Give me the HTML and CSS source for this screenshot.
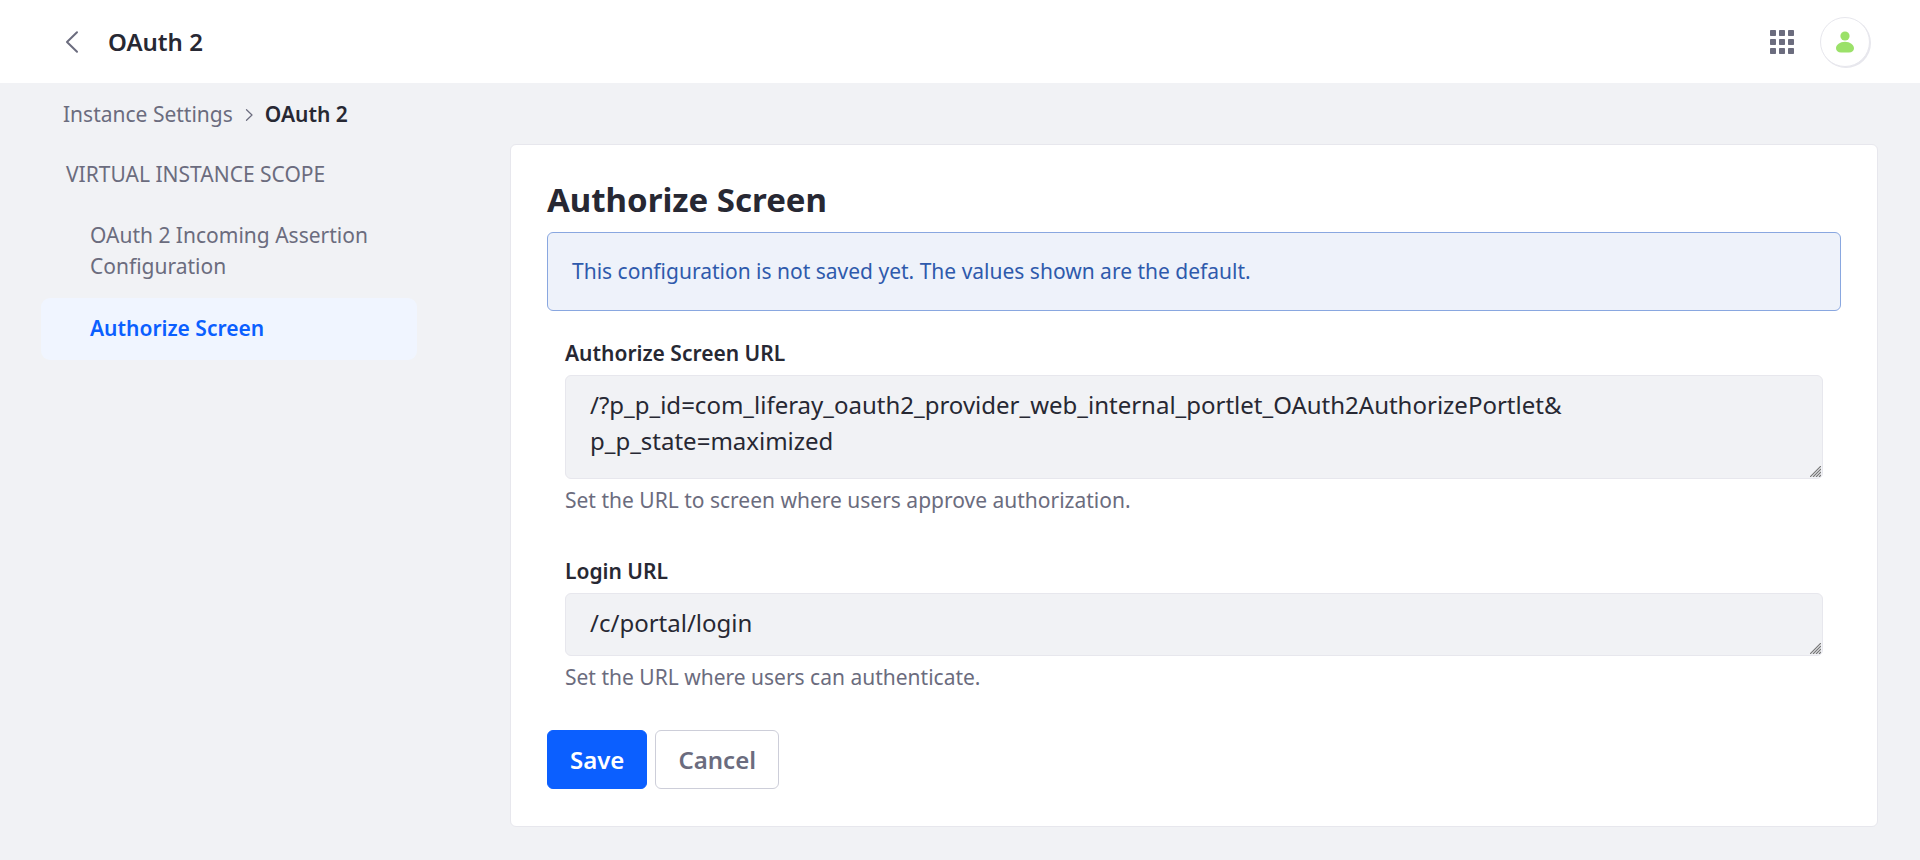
FILE: index.html
```html
<!DOCTYPE html>
<html lang="en">
<head>
<meta charset="utf-8">
<title>OAuth 2</title>
<link rel="stylesheet" href="styles.css">
</head>
<body>
<header class="topbar">
  <a class="back" href="#" aria-label="Back">
    <svg width="24" height="24" viewBox="0 0 24 24"><path d="M17 2.200 7 12l10 9.800" fill="none" stroke="currentColor" stroke-width="2" stroke-linecap="round" stroke-linejoin="round"/></svg>
  </a>
  <h1 class="topbar-title">OAuth 2</h1>
  <button class="apps" type="button" aria-label="Applications">
    <svg width="24" height="24" viewBox="0 0 24 24" fill="currentColor"><rect width="6" height="6" rx="0.700"/><rect x="9" width="6" height="6" rx="0.700"/><rect x="18" width="6" height="6" rx="0.700"/><rect y="9" width="6" height="6" rx="0.700"/><rect x="9" y="9" width="6" height="6" rx="0.700"/><rect x="18" y="9" width="6" height="6" rx="0.700"/><rect y="18" width="6" height="6" rx="0.700"/><rect x="9" y="18" width="6" height="6" rx="0.700"/><rect x="18" y="18" width="6" height="6" rx="0.700"/></svg>
  </button>
  <button class="avatar" type="button" aria-label="User menu">
    <svg width="24" height="24" viewBox="0 0 24 24" fill="currentColor"><circle cx="12" cy="6" r="4.600"/><path d="M12 11.700c-5 0-9 3-9 6.600 0 2.700 2 4.200 5 4.200h8c3 0 5-1.500 5-4.200 0-3.600-4-6.600-9-6.600z"/></svg>
  </button>
</header>
<nav class="breadcrumb" aria-label="Breadcrumb">
  <a class="crumb" href="#">Instance Settings</a>
  <svg class="crumb-sep" width="12" height="12" viewBox="0 0 12 12"><path d="M3.500.700 9 6l-5.500 5.300" fill="none" stroke="currentColor" stroke-width="1.200" stroke-linecap="round" stroke-linejoin="round"/></svg>
  <span class="crumb-current">OAuth 2</span>
</nav>
<div class="layout">
  <nav class="sidebar" aria-label="Virtual instance scope">
    <div class="sidebar-title">VIRTUAL INSTANCE SCOPE</div>
    <a class="sidebar-item" href="#">OAuth 2 Incoming Assertion Configuration</a>
    <a class="sidebar-item active" href="#">Authorize Screen</a>
  </nav>
  <main class="card">
    <h2 class="card-title">Authorize Screen</h2>
    <div class="alert">This configuration is not saved yet. The values shown are the default.</div>
    <form class="form">
      <div class="field">
        <label class="label" for="authorize-url">Authorize Screen URL</label>
        <textarea class="input tall" id="authorize-url">/?p_p_id=com_liferay_oauth2_provider_web_internal_portlet_OAuth2AuthorizePortlet&amp;
p_p_state=maximized</textarea>
        <div class="help">Set the URL to screen where users approve authorization.</div>
      </div>
      <div class="field">
        <label class="label" for="login-url">Login URL</label>
        <textarea class="input" id="login-url">/c/portal/login</textarea>
        <div class="help">Set the URL where users can authenticate.</div>
      </div>
      <div class="actions">
        <button class="btn primary" type="submit">Save</button>
        <button class="btn" type="button">Cancel</button>
      </div>
    </form>
  </main>
</div>
</body>
</html>
```
FILE: styles.css
```css
* { box-sizing: border-box; }
body {
  margin: 0;
  background: #f1f2f5;
  color: #272833;
  font-family: "Noto Sans", sans-serif;
  font-size: 21px;
  line-height: 31px;
}
a { text-decoration: none; }
button { font-family: inherit; cursor: pointer; }
h1, h2 { margin: 0; }
svg { display: block; }

.topbar {
  display: flex;
  align-items: center;
  height: 83px;
  padding: 0 50px 0 60px;
  background: #fff;
  color: #6b6c7e;
}
.back { display: block; color: inherit; }
.topbar-title {
  margin-left: 24px;
  margin-right: auto;
  color: #272833;
  font-size: 24px;
  font-weight: 600;
}
.apps {
  padding: 0;
  border: 0;
  background: none;
  color: inherit;
}
.avatar {
  display: grid;
  place-items: center;
  width: 50px;
  height: 50px;
  margin-left: 26px;
  padding: 0;
  border: 1px solid #e7e7ed;
  border-radius: 50%;
  background: #fff;
  box-shadow: 1px 1px 0 #e7e7ed;
  color: #9be169;
}

.breadcrumb {
  display: flex;
  align-items: center;
  padding: 16px 63px 14px;
}
.crumb { color: #6b6c7e; }
.crumb-sep { margin: 0 10px; color: #6b6c7e; }
.crumb-current { font-weight: 600; }

.layout {
  display: grid;
  grid-template-columns: 376px minmax(0, 1fr);
  column-gap: 93px;
  align-items: start;
  padding: 0 42px 33px 41px;
}
.sidebar-title {
  padding: 15px 25px;
  color: #6b6c7e;
}
.sidebar-item {
  display: block;
  padding: 15px 46px 16px 49px;
  border-radius: 9px;
  color: #6b6c7e;
}
.sidebar-item.active {
  background: #f0f5ff;
  color: #0b5fff;
  font-weight: 600;
}

.card {
  padding: 35px 36px 37px;
  border: 1px solid #e7e7ed;
  border-radius: 6px;
  background: #fff;
}
.card-title {
  margin-bottom: 12px;
  font-size: 33px;
  line-height: 40px;
  font-weight: 700;
}
.alert {
  padding: 23px 24px;
  border: 1px solid #89a7e0;
  border-radius: 6px;
  background: #eef2fa;
  color: #2e5aac;
}
.form { padding-top: 27px; }
.field { padding: 0 18px 37px; }
.field + .field { padding-top: 3px; }
.label {
  display: block;
  margin-bottom: 6px;
  font-weight: 600;
}
.input {
  display: block;
  width: 100%;
  height: 63px;
  padding: 11px 24px;
  border: 1px solid #e7e7ed;
  border-radius: 6px;
  background: #f1f2f5;
  color: #272833;
  font-family: inherit;
  font-size: 24px;
  line-height: 36px;
  resize: vertical;
}
.input.tall { height: 104px; }
.input::-webkit-resizer {
  background: url("data:image/svg+xml,%3Csvg xmlns='http://www.w3.org/2000/svg' width='11' height='11'%3E%3Cpath d='M0 11 11 0M3 11l8-8M6 11l5-5M9 11l2-2' stroke='%23777' stroke-width='1.2'/%3E%3C/svg%3E") no-repeat right 1px bottom 1px;
}
.help {
  margin-top: 6px;
  color: #6b6c7e;
}
.actions { display: flex; gap: 8px; }
.btn {
  height: 59px;
  padding: 0 22px;
  border: 1px solid #cdced9;
  border-radius: 6px;
  background: #fff;
  color: #6b6c7e;
  font-size: 24px;
  font-weight: 600;
}
.btn.primary {
  border-color: #0b5fff;
  background: #0b5fff;
  color: #fff;
}
```
